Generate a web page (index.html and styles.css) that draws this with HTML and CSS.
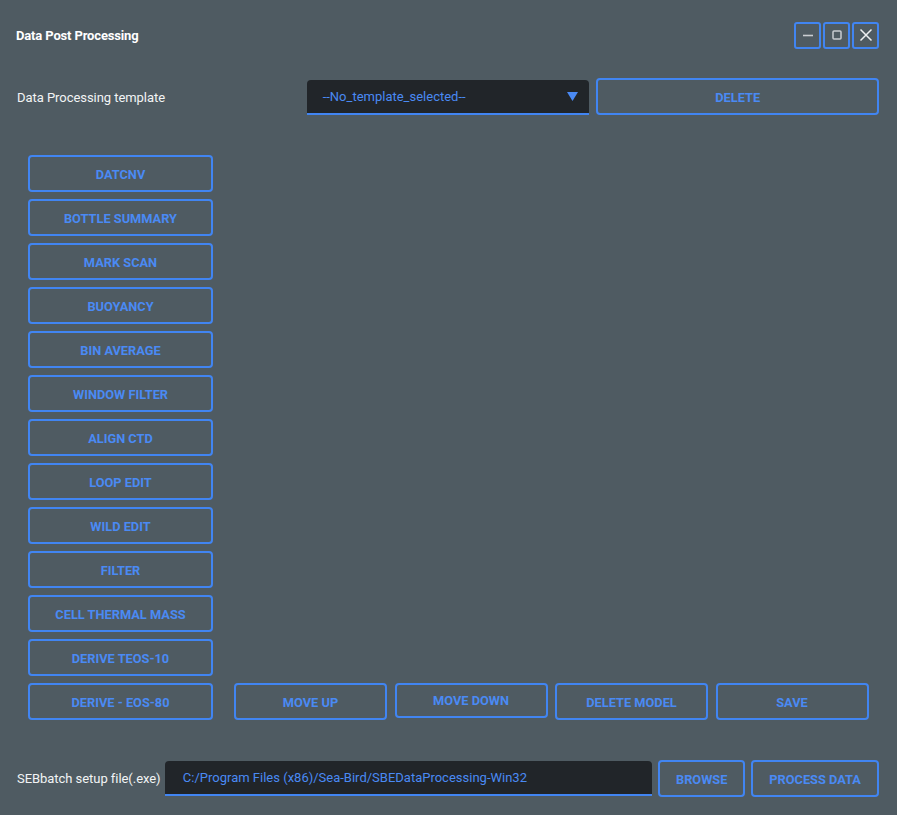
FILE: index.html
```html
<!DOCTYPE html>
<html>
<head>
<meta charset="utf-8">
<link rel="stylesheet" href="styles.css">
</head>
<body>
<div class="app">
  <header class="header">
    <div class="title">Data Post Processing</div>
    <div class="winbtns">
      <button class="winbtn" aria-label="minimize"><svg width="14" height="14" viewBox="0 0 14 14"><path d="M2 7.5h10" stroke="#c9cdd1" stroke-width="1.6"/></svg></button>
      <button class="winbtn" aria-label="maximize"><svg width="14" height="14" viewBox="0 0 14 14"><rect x="3" y="3" width="8" height="8" rx="1" fill="none" stroke="#c9cdd1" stroke-width="1.5"/></svg></button>
      <button class="winbtn" aria-label="close"><svg width="14" height="14" viewBox="0 0 14 14"><path d="M1.5 1.5l11 11M12.5 1.5l-11 11" stroke="#eef0f2" stroke-width="1.5"/></svg></button>
    </div>
  </header>

  <div class="template-row">
    <div class="label">Data Processing template</div>
    <div class="select">
      <span>--No_template_selected--</span>
      <svg class="caret" width="11" height="9" viewBox="0 0 11 9"><path d="M0 0h11L5.5 9z" fill="#4a8af4"/></svg>
    </div>
    <button class="btn delete">DELETE</button>
  </div>

  <main class="main">
    <div class="modules">
      <button class="btn">DATCNV</button>
      <button class="btn">BOTTLE SUMMARY</button>
      <button class="btn">MARK SCAN</button>
      <button class="btn">BUOYANCY</button>
      <button class="btn">BIN AVERAGE</button>
      <button class="btn">WINDOW FILTER</button>
      <button class="btn">ALIGN CTD</button>
      <button class="btn">LOOP EDIT</button>
      <button class="btn">WILD EDIT</button>
      <button class="btn">FILTER</button>
      <button class="btn">CELL THERMAL MASS</button>
      <button class="btn">DERIVE TEOS-10</button>
      <button class="btn">DERIVE - EOS-80</button>
    </div>
    <div class="workspace">
      <div class="actions">
        <button class="btn">MOVE UP</button>
        <button class="btn short">MOVE DOWN</button>
        <button class="btn">DELETE MODEL</button>
        <button class="btn">SAVE</button>
      </div>
    </div>
  </main>

  <footer class="footer">
    <div class="label">SEBbatch setup file(.exe)</div>
    <div class="input">C:/Program Files (x86)/Sea-Bird/SBEDataProcessing-Win32</div>
    <button class="btn browse">BROWSE</button>
    <button class="btn process">PROCESS DATA</button>
  </footer>
</div>
</body>
</html>
```

FILE: styles.css
```css
* { box-sizing: border-box; }
html, body {
  margin: 0;
  padding: 0;
  background: #4f5b62;
  font-family: Roboto, "Liberation Sans", sans-serif;
}
.app {
  width: 897px;
  height: 815px;
  padding: 22px 18px 0 16px;
}
.header {
  display: flex;
  align-items: center;
  justify-content: space-between;
  height: 26px;
  padding-right: 0;
}
.title {
  color: #ffffff;
  font-weight: 700;
  font-size: 13px;
  letter-spacing: -0.15px;
}
.winbtns {
  display: flex;
  gap: 2px;
}
.winbtn {
  width: 27px;
  height: 27px;
  padding: 0;
  border: 2px solid #4185f2;
  border-radius: 3px;
  background: transparent;
  display: flex;
  align-items: center;
  justify-content: center;
}
.template-row {
  display: flex;
  align-items: center;
  margin-top: 30px;
  height: 37px;
  padding-left: 1px;
}
.label {
  color: #f2f4f5;
  font-size: 13px;
  letter-spacing: -0.05px;
}
.template-row .label {
  width: 290px;
  padding-top: 2px;
}
.select {
  width: 283px;
  height: 35px;
  background: #212529;
  border-radius: 4px 4px 0 0;
  border-bottom: 2px solid #4185f2;
  display: flex;
  align-items: center;
  justify-content: space-between;
  padding: 0 11px 0 16px;
  color: #4a8af4;
  font-size: 13px;
  margin-top: 1px;
}
.caret { margin-top: 1px; }
.btn {
  background: transparent;
  border: 2px solid #4185f2;
  border-radius: 4px;
  color: #4a8af4;
  font-family: Roboto, "Liberation Sans", sans-serif;
  font-weight: 700;
  font-size: 12.8px;
  height: 37px;
  padding: 1px 0 0;
  cursor: pointer;
}
.delete {
  margin-left: 7px;
  width: 283px;
  height: 37px;
}
.main {
  display: grid;
  grid-template-columns: 185px 1fr;
  column-gap: 21px;
  margin-top: 40px;
  padding-left: 12px;
}
.modules {
  display: flex;
  flex-direction: column;
  gap: 7px;
}
.workspace {
  display: flex;
  flex-direction: column;
  justify-content: flex-end;
}
.actions {
  display: grid;
  grid-template-columns: repeat(4, 153px);
  column-gap: 7.5px;
  align-items: start;
}
.actions .short { height: 35px; padding-top: 0; }
.footer {
  display: flex;
  align-items: center;
  margin-top: 40px;
  padding-left: 1px;
}
.footer .label { width: 148px; }
.input {
  width: 488px;
  height: 35px;
  background: #212529;
  border-radius: 4px 4px 0 0;
  border-bottom: 2px solid #4185f2;
  color: #4a8af4;
  font-size: 13px;
  display: flex;
  align-items: center;
  padding-left: 18px;
}
.browse {
  margin-left: 6px;
  width: 87px;
}
.process {
  margin-left: 6px;
  width: 128px;
}
```
